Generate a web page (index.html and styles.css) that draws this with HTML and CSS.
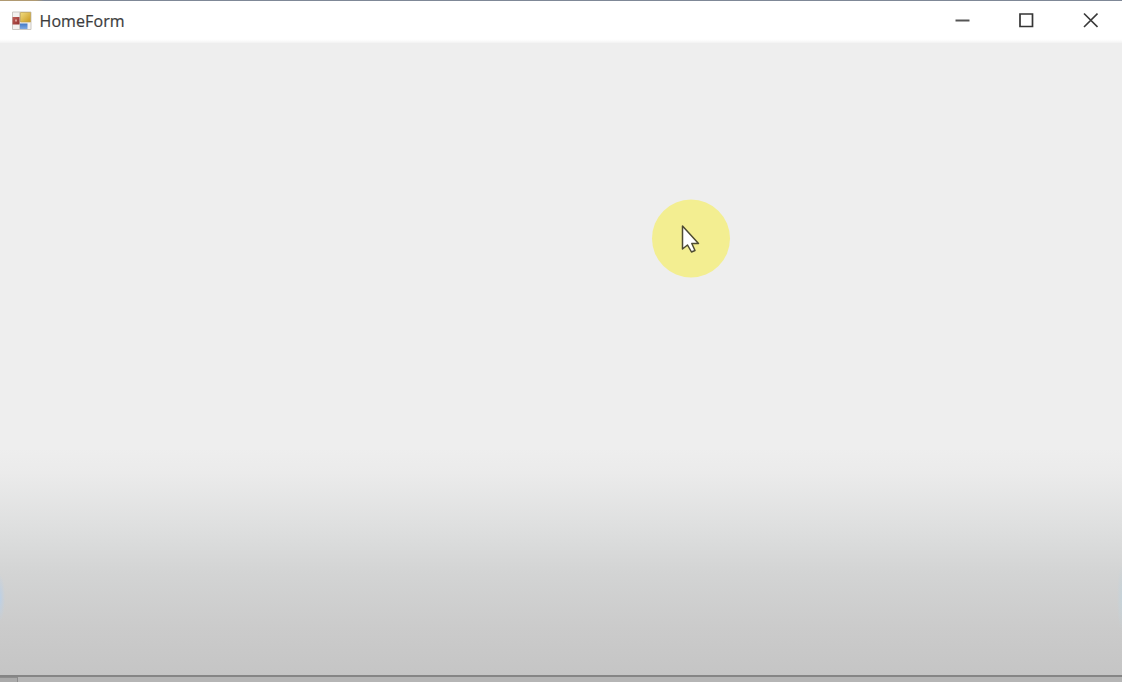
FILE: index.html
```html
<!DOCTYPE html>
<html lang="en">
<head>
<meta charset="utf-8">
<title>HomeForm</title>
<link rel="stylesheet" href="styles.css">
</head>
<body>
<div class="window">
  <header class="titlebar">
    <svg class="app-icon" width="20" height="20" viewBox="0 0 20 20">
      <defs>
        <linearGradient id="gold" x1="0" y1="0" x2="1" y2="1"><stop offset="0" stop-color="#f1dc80"/><stop offset="1" stop-color="#c9981f"/></linearGradient>
        <linearGradient id="red" x1="0" y1="0" x2="1" y2="1"><stop offset="0" stop-color="#c06059"/><stop offset="1" stop-color="#93302d"/></linearGradient>
        <linearGradient id="blue" x1="0" y1="0" x2="0" y2="1"><stop offset="0" stop-color="#4378c4"/><stop offset="1" stop-color="#7fa9e2"/></linearGradient>
      </defs>
      <path d="M.5 1h18.5v17.5H.5z" fill="#f3f1ef" stroke="#cbc8c4"/>
      <path d="M7.5 1v17.5" stroke="#d2cfcb"/>
      <path d="M.5 6h7v7.5h-7z" fill="url(#red)"/>
      <path d="M3 8.5h2v2H3z" fill="#dba09a"/>
      <path d="M8.5 1.5h10v9.5h-10z" fill="url(#gold)" stroke="#bea04c" stroke-width=".7"/>
      <path d="M8 12.5h7.5v5.5h-7.5z" fill="url(#blue)"/>
    </svg>
    <h1 class="title">HomeForm</h1>
    <nav class="controls">
      <button class="control" aria-label="Minimize"><svg width="16" height="16" viewBox="0 0 16 16"><path d="M1.5 8.5h14" stroke="#555" stroke-width="2"/></svg></button>
      <button class="control" aria-label="Maximize"><svg width="16" height="16" viewBox="0 0 16 16"><path d="M2 2h12.5v12.5H2z" fill="none" stroke="#353535" stroke-width="1.7"/></svg></button>
      <button class="control" aria-label="Close"><svg width="16" height="16" viewBox="0 0 16 16"><path d="M2 1.5l13.5 13.5M15.5 1.5L2 15" stroke="#393939" stroke-width="1.6"/></svg></button>
    </nav>
  </header>
  <main class="client">
    <svg class="pointer" width="80" height="80" viewBox="0 0 80 80">
      <circle cx="40" cy="39.5" r="39" fill="#f3ee91"/>
      <path d="M31.5 27v23l5-4 4 7 3.5-1.5-3.2-7h6.7z" fill="#fff" stroke="#4d4a32" stroke-width="1.5" stroke-linejoin="round"/>
    </svg>
  </main>
</div>
<footer class="backdrop"><span class="backdrop-cell"></span></footer>
</body>
</html>
```
FILE: styles.css
```css
* { box-sizing: border-box; }
body {
  margin: 0;
  height: 682px;
  overflow: hidden;
  display: flex;
  flex-direction: column;
  font-family: "Open Sans", "Noto Sans", sans-serif;
}
.window {
  height: 677px;
  flex: none;
  display: flex;
  flex-direction: column;
  padding-top: 1px;
  border-bottom: 2px solid #858585;
  background: linear-gradient(90deg, #b09a72 0 36px, #7f8897 44px);
}
.titlebar {
  height: 42px;
  flex: none;
  display: flex;
  align-items: center;
  padding-left: 12px;
  background: linear-gradient(#fff 0 38px, #fafafa 40px, #f2f2f2);
}
.app-icon { margin-top: -2px; }
.title {
  margin: -3px 0 0 7.5px;
  font-size: 16px;
  line-height: 22px;
  font-weight: 400;
  letter-spacing: .1px;
  color: #3c3c3c;
  -webkit-text-stroke: .2px #3c3c3c;
}
.controls { display: flex; margin-left: auto; align-self: stretch; }
.control {
  width: 64px;
  height: 38px;
  padding: 0;
  border: 0;
  background: none;
  display: flex;
  align-items: center;
  justify-content: center;
}
.control svg { margin-top: -1px; }
.client {
  position: relative;
  flex: 1;
  background:
    radial-gradient(ellipse 5px 24px at 0 555px, #bdd0e5, transparent),
    radial-gradient(ellipse 5px 35px at 100% 555px, #c5d3da, transparent),
    linear-gradient(#eee 0 405px, #ebebeb 430px, #dedfdf 485px, #d3d4d4 530px, #cbcbcb 585px, #c5c5c5 632px);
}
.pointer { position: absolute; left: 651px; top: 156px; }
.backdrop { flex: 1; display: flex; background: #b5b5b5; }
.backdrop-cell { width: 18px; background: #aaa; border-right: 1px solid #8d8d8d; border-top: 1px solid #8d8d8d; }
```
